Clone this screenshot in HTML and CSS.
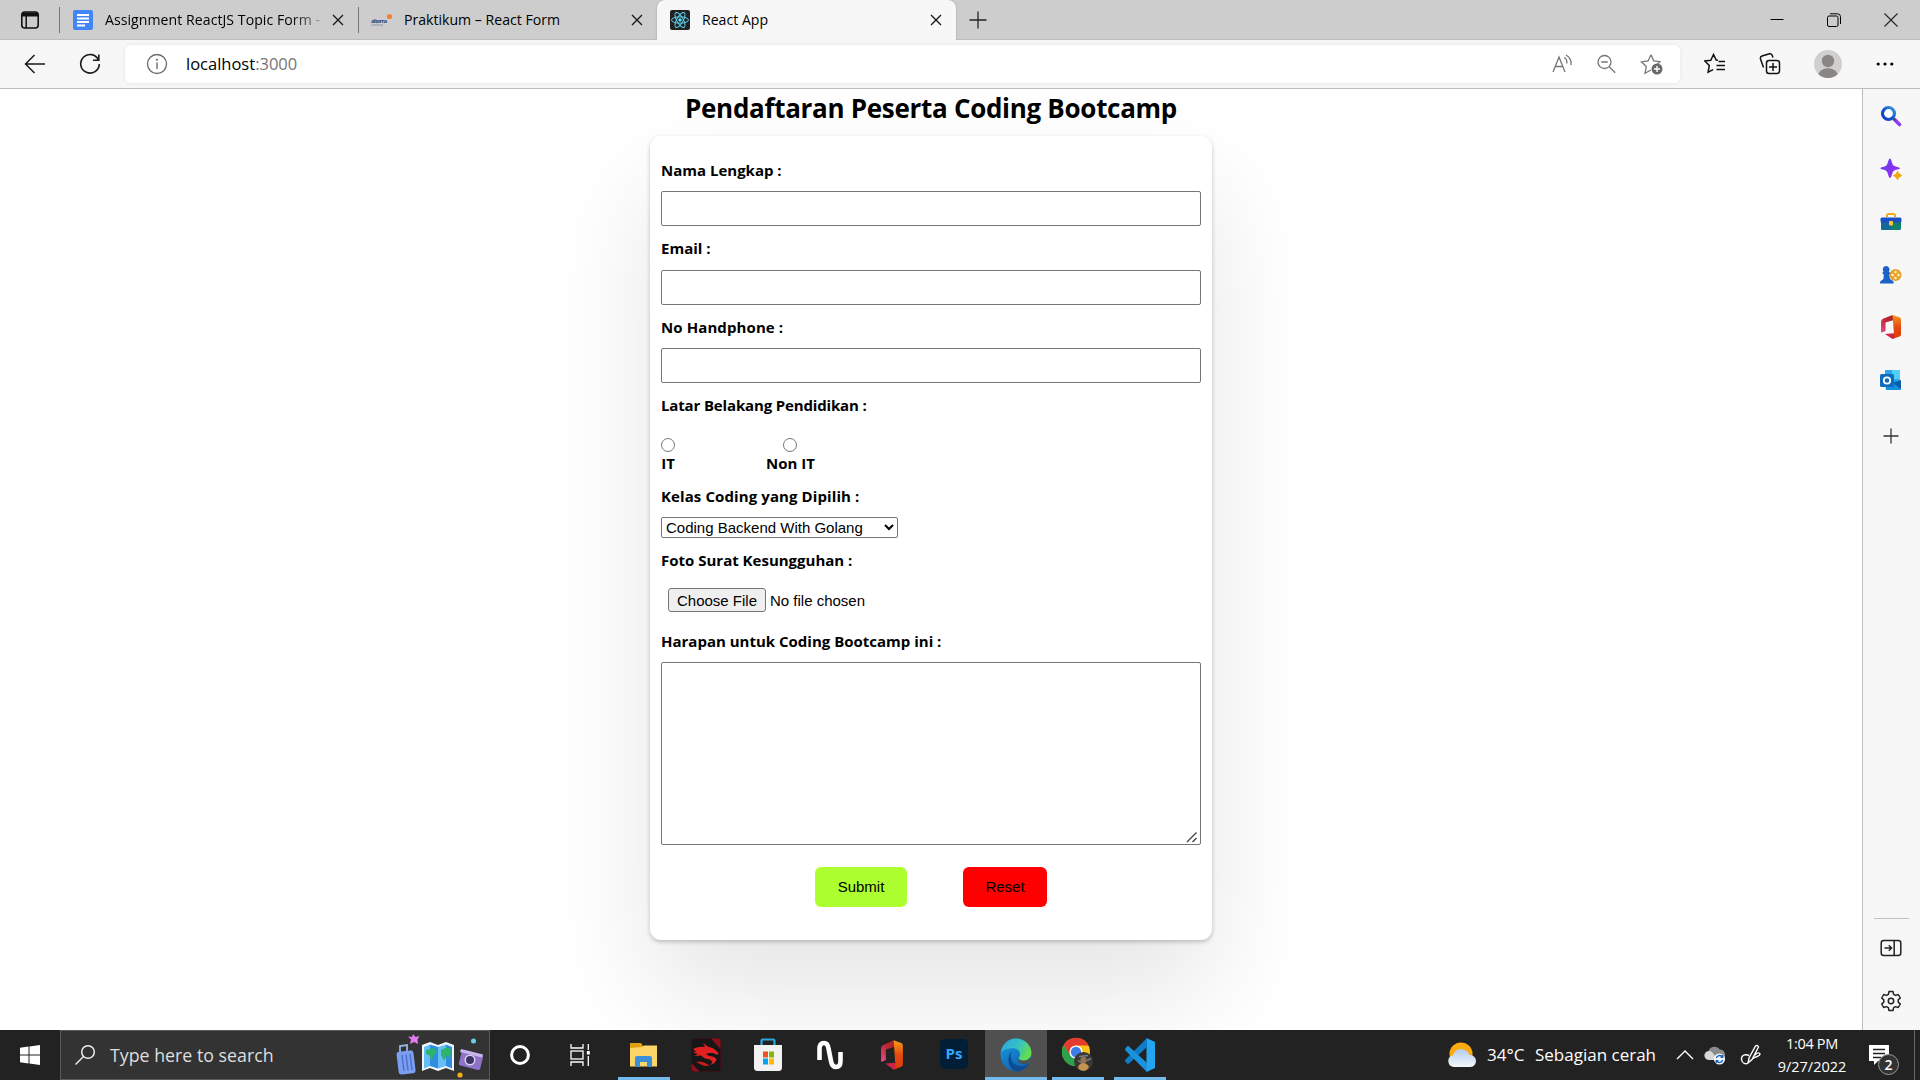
FILE: index.html
```html
<!DOCTYPE html>
<html lang="id">
<head>
<meta charset="utf-8">
<title>React App</title>
<link rel="stylesheet" href="styles.css">
</head>
<body>
<header class="tabstrip">
  <svg class="tab-actions" width="20" height="20" viewBox="0 0 20 20"><rect x="1.8" y="2" width="16.4" height="16" rx="3" fill="none" stroke="#111" stroke-width="1.6"/><path d="M2 2.5h16v4H2z" fill="#111"/><path d="M6.2 5v13" stroke="#111" stroke-width="1.5"/></svg>
  <div class="tab tab-docs">
    <svg class="favicon" width="20" height="20" viewBox="0 0 20 20"><rect width="20" height="20" rx="2" fill="#4285f4"/><path d="M4 5h12M4 8.500h12M4 12h12M4 15.500h8" stroke="#fff" stroke-width="1.8"/></svg>
    <span class="tab-title fade">Assignment ReactJS Topic Form -</span>
    <svg class="x" width="12" height="12" viewBox="0 0 12 12"><path d="M1 1l10 10M11 1L1 11"/></svg>
  </div>
  <div class="tab tab-alterra">
    <svg class="favicon" width="22" height="20" viewBox="0 0 22 20"><text x="0" y="12.5" class="alt" textLength="16">alterra</text><text x="0" y="16" class="alt2" textLength="12">academy</text><circle cx="18.5" cy="6.5" r="2.6" fill="#f58034"/></svg>
    <span class="tab-title">Praktikum – React Form</span>
    <svg class="x" width="12" height="12" viewBox="0 0 12 12"><path d="M1 1l10 10M11 1L1 11"/></svg>
  </div>
  <div class="tab tab-active">
    <svg class="favicon" width="20" height="20" viewBox="0 0 20 20"><rect width="20" height="20" rx="2" fill="#222"/><g fill="none" stroke="#61dafb" stroke-width=".9"><ellipse cx="10" cy="10" rx="8.5" ry="3.2"/><ellipse cx="10" cy="10" rx="8.5" ry="3.2" transform="rotate(60 10 10)"/><ellipse cx="10" cy="10" rx="8.5" ry="3.2" transform="rotate(120 10 10)"/></g><circle cx="10" cy="10" r="1.7" fill="#61dafb"/></svg>
    <span class="tab-title">React App</span>
    <svg class="x" width="12" height="12" viewBox="0 0 12 12"><path d="M1 1l10 10M11 1L1 11"/></svg>
  </div>
  <svg class="newtab" width="18" height="18" viewBox="0 0 18 18"><path d="M9 .5v17M.5 9h17" stroke="#222" stroke-width="1.3"/></svg>
  <div class="wincontrols">
    <svg width="14" height="14" viewBox="0 0 14 14"><path d="M.5 6.500h13" stroke="#000"/></svg>
    <svg width="14" height="14" viewBox="0 0 14 14" fill="none" stroke="#000"><rect x=".5" y="3" width="10.5" height="10.5" rx="1.5"/><path d="M3 .8h7.500a3 3 0 0 1 3 3V11"/></svg>
    <svg width="14" height="14" viewBox="0 0 14 14"><path d="M.5.5l13 13M13.500.5l-13 13" stroke="#222" stroke-width="1.1"/></svg>
  </div>
</header>
<nav class="toolbar">
  <svg width="22" height="20" viewBox="0 0 22 20" class="back"><path d="M21 10H2M10.500 1L1.500 10l9 9" fill="none" stroke="#1b1b1b" stroke-width="1.5"/></svg>
  <svg width="22" height="22" viewBox="0 0 22 22" class="reload"><path d="M19.500 7A9.300 9.300 0 1 0 20.300 11M19.800 1.500V7.200H14" fill="none" stroke="#1b1b1b" stroke-width="1.6"/></svg>
  <div class="omnibox">
    <svg width="22" height="22" viewBox="0 0 22 22"><circle cx="11" cy="11" r="9.500" fill="none" stroke="#6b6b6b" stroke-width="1.300"/><path d="M11 9.500v6.500" stroke="#6b6b6b" stroke-width="1.400"/><circle cx="11" cy="6.700" r="1" fill="#6b6b6b"/></svg>
    <span class="url">localhost<span class="port">:3000</span></span>
    <div class="omni-icons">
      <svg width="22" height="20" viewBox="0 0 22 20" fill="none" stroke="#767676" stroke-width="1.3"><path d="M1 18L7 3l6 15M3.200 12.500h7.600M12.300 3.500a6 6 0 0 1 2.500 6M14 1a10 10 0 0 1 5 10"/></svg>
      <svg width="20" height="20" viewBox="0 0 20 20" fill="none" stroke="#767676" stroke-width="1.3"><circle cx="7.500" cy="8" r="6.500"/><path d="M4.200 8h6.600M12.200 12.700l6 6"/></svg>
      <svg width="24" height="22" viewBox="0 0 24 22"><path d="M11 1.800l2.700 6 6.300.9-4.600 4.600M11 17l-6 3.200 1.300-6.700L1.500 8.900l6.600-.9L11 1.800" fill="none" stroke="#767676" stroke-width="1.300"/><circle cx="17" cy="16" r="5.500" fill="#696969"/><path d="M17 13v6M14 16h6" stroke="#fff" stroke-width="1.400"/></svg>
    </div>
  </div>
  <div class="tools">
    <svg width="22" height="22" viewBox="0 0 22 22"><path d="M14 7.300l-1.800-.3L9.500 1.500 6.800 7.200l-6 .8 4.500 4.500-1.200 6.700 5-2.600M14.500 8.500H21M12.500 12.500H21M12.500 16.500H21" fill="none" stroke="#111" stroke-width="1.500"/></svg>
    <svg width="22" height="22" viewBox="0 0 22 22" fill="none" stroke="#111" stroke-width="1.500"><rect x="7.500" y="7.500" width="13" height="13" rx="2.500"/><path d="M14 10v8M10 14h8M4.500 14.500L1.500 6Q1 3.700 3 3l7.500-2.200q2-.4 2.800 1.700l.7 2"/></svg>
    <svg width="28" height="28" viewBox="0 0 28 28"><defs><clipPath id="av"><circle cx="14" cy="14" r="14"/></clipPath></defs><g clip-path="url(#av)"><rect width="28" height="28" fill="#d2d0ce"/><circle cx="14" cy="11" r="6.200" fill="#8a8683"/><ellipse cx="14" cy="26" rx="10" ry="7.800" fill="#8a8683"/></g></svg>
    <svg width="18" height="4" viewBox="0 0 18 4"><circle cx="2.200" cy="2" r="1.600"/><circle cx="9" cy="2" r="1.600"/><circle cx="15.800" cy="2" r="1.600"/></svg>
  </div>
</nav>
<div class="workspace">
  <main class="page">
    <h1 class="heading">Pendaftaran Peserta Coding Bootcamp</h1>
    <form class="card">
      <div class="field"><label for="nama">Nama Lengkap :</label><input id="nama" class="text" type="text"></div>
      <div class="field"><label for="email">Email :</label><input id="email" class="text late" type="text"></div>
      <div class="field"><label class="looser" for="hp">No Handphone :</label><input id="hp" class="text" type="text"></div>
      <div class="field"><label class="tighter">Latar Belakang Pendidikan :</label>
        <div class="radios">
          <div class="radio"><input type="radio" name="bg" id="it"><label for="it">IT</label></div>
          <div class="radio"><input type="radio" name="bg" id="nonit"><label for="nonit">Non IT</label></div>
        </div>
      </div>
      <div class="field"><label class="looser" for="kelas">Kelas Coding yang Dipilih :</label><select id="kelas"><option>Coding Backend With Golang</option></select></div>
      <div class="field"><label for="foto">Foto Surat Kesungguhan :</label><input id="foto" class="file" type="file"></div>
      <div class="field harapan"><label for="harapan">Harapan untuk Coding Bootcamp ini :</label>
        <div class="area"><textarea id="harapan"></textarea><svg class="grip" width="12" height="12" viewBox="0 0 12 12"><path d="M1 11L10.500 1.500M6.500 11l4-4" stroke="#444" stroke-width="1.400"/></svg></div>
      </div>
      <div class="actions"><button type="button" class="submit">Submit</button><button type="button" class="reset">Reset</button></div>
    </form>
  </main>
  <aside class="sidebar">
    <div class="side-top">
      <svg width="22" height="22" viewBox="0 0 22 22"><defs><linearGradient id="sg" x1="1" y1="0" x2="0" y2="1"><stop offset="0" stop-color="#3aa0d8"/><stop offset=".5" stop-color="#1757d0"/><stop offset="1" stop-color="#0b3fc0"/></linearGradient></defs><path d="M14.500 14.500l5 5" stroke="#8b3ff0" stroke-width="3.600" stroke-linecap="round"/><path d="M12.500 12.500l3 3" stroke="#444" stroke-width="1.500"/><circle cx="8.500" cy="8.500" r="6" fill="#fff" stroke="url(#sg)" stroke-width="3.200"/></svg>
      <svg width="22" height="22" viewBox="0 0 22 22"><defs><linearGradient id="sp" x1="0" y1="0" x2="1" y2="1"><stop offset="0" stop-color="#5b3df5"/><stop offset="1" stop-color="#a52bf0"/></linearGradient></defs><path d="M10 .5c1.500 0 1.700 5.500 3.600 6.900S20 9 20 10.200s-4.800 1.200-6.400 2.800S11.500 20 10 20s-1.800-5.300-3.600-7S.5 11.500.5 10.200s4.300-1.200 5.900-2.800S8.500.5 10 .5z" fill="url(#sp)"/><path d="M17.500 12.500q1.200 3.800 5 5-3.800 1.200-5 5-1.200-3.800-5-5 3.800-1.200 5-5z" fill="#f5a80c"/></svg>
      <svg width="22" height="22" viewBox="0 0 22 22"><path d="M7 6V4.500Q7 3 8.500 3h5Q15 3 15 4.500V6" fill="none" stroke="#efa91c" stroke-width="2"/><rect x="1" y="9" width="20" height="10" rx="1.500" fill="#13806b"/><path d="M1 10h10v9H2.500Q1 19 1 17.500z" fill="#146a94"/><rect x=".5" y="6.500" width="21" height="5" rx="1.500" fill="#1a4fc4"/><rect x="9" y="10" width="4" height="4.500" rx="1" fill="#ffc63a"/></svg>
      <svg width="22" height="22" viewBox="0 0 22 22"><circle cx="15.500" cy="11" r="6" fill="#e6a32b"/><g fill="#fff0c0"><circle cx="15.500" cy="8" r="1.300"/><circle cx="15.500" cy="14" r="1.300"/><circle cx="12.500" cy="11" r="1.300"/><circle cx="18.500" cy="11" r="1.300"/></g><path d="M6 2a3.500 3.500 0 0 1 2.800 5.700L10.500 9l-1.300 1.400.8 4.500 3 2.200q.7.500.7 2.300H0q0-1.800.7-2.300L3.400 15l.4-4.600L2 9l1.500-1.300A3.500 3.500 0 0 1 6 2z" fill="#1b62c8"/></svg>
      <svg width="22" height="26" viewBox="0 0 22 26"><defs><linearGradient id="of" x1="0" y1="1" x2="1" y2="0"><stop offset="0" stop-color="#e8508a"/><stop offset=".5" stop-color="#c0283c"/><stop offset="1" stop-color="#9c2418"/></linearGradient><linearGradient id="of2" x1="0" y1="0" x2="0" y2="1"><stop offset="0" stop-color="#f59a1c"/><stop offset=".5" stop-color="#e64a10"/><stop offset="1" stop-color="#d93c0c"/></linearGradient></defs><path d="M12.500 1L3 4.800Q1 5.600 1 8v9.500q0 1.500 1.500.8L5.500 17V8.500l8.500-2.400z" fill="url(#of)"/><path d="M12.500 1l7 2.300Q21 3.900 21 5.500v15q0 1.500-1.500 2L12.500 25l1.500-5z" fill="url(#of2)"/><path d="M5 20l9-.7V5.500V24l-1.500 1z" fill="#cf2444"/></svg>
      <svg width="22" height="22" viewBox="0 0 22 22"><rect x="5" y="1" width="15" height="14" rx="1" fill="#28a8ea"/><path d="M12 1h7q1 0 1 1v8h-8z" fill="#50d0f8"/><path d="M5 12h16v8q0 1-1 1H6z" fill="#1490df"/><path d="M21 11v9l-8-6z" fill="#0a5ea8"/><rect y="5" width="14" height="13" rx="1.500" fill="#0f6cbd"/><circle cx="7" cy="11.500" r="3.200" fill="none" stroke="#fff" stroke-width="1.800"/></svg>
      <svg width="16" height="16" viewBox="0 0 16 16"><path d="M8 .5v15M.5 8h15" stroke="#333" stroke-width="1.300"/></svg>
    </div>
    <div class="side-bottom">
      <svg width="22" height="18" viewBox="0 0 22 18" fill="none" stroke="#222" stroke-width="1.500"><rect x="1.200" y="1.500" width="19.600" height="15" rx="2.500"/><path d="M14.200 1.500v15M4.500 9h7M8.800 6.200L11.600 9l-2.800 2.800"/></svg>
      <svg width="22" height="22" viewBox="0 0 22 22" fill="none" stroke="#222" stroke-width="1.500" stroke-linejoin="round"><circle cx="11" cy="11" r="2.700"/><path d="M9 1.500h4l.6 2.800 2 1.100 2.700-.9 2 3.500-2.100 1.900v2.200l2.100 1.900-2 3.500-2.700-.9-2 1.100-.6 2.800H9l-.6-2.800-2-1.100-2.700.9-2-3.500 2.100-1.900V9.900L1.700 8l2-3.500 2.700.9 2-1.100z"/></svg>
    </div>
  </aside>
</div>
<footer class="taskbar">
  <div class="start"><svg width="20" height="20" viewBox="0 0 20 20"><path d="M0 2.800L8.500 1.600v8H0zM9.500 1.500L20 0v9.600H9.500zM0 10.500h8.500v8L0 17.300zM9.500 10.500H20V20L9.500 18.600z" fill="#fff"/></svg></div>
  <div class="search">
    <svg width="22" height="22" viewBox="0 0 22 22" fill="none" stroke="#eee" stroke-width="1.500"><circle cx="13" cy="8" r="6.300"/><path d="M8.500 12.500L.5 20.500"/></svg>
    <span class="search-text">Type here to search</span>
    <svg class="travel" width="90" height="46" viewBox="0 0 90 46">
      <path d="M18 2l2.500 3 4-1-2 3.500L23 12l-4-2-4 2 1-4.500-3-3 4 .5z" fill="#e07cf0"/>
      <path d="M5 20V14l7-1v6" fill="none" stroke="#9ab4e8" stroke-width="1.800"/>
      <rect x="2.500" y="19" width="17" height="23" rx="3" fill="#7b9ff0" transform="rotate(-7 11 30)"/><path d="M7 23l2 16M11 22.500l2 16M15 22l2 16" stroke="#4f6fd0" stroke-width="1.500"/>
      <path d="M27 13l8-3 8 3 8-3 8 3v26l-8-3-8 3-8-3-8 3z" fill="#f2f6fa"/><path d="M29 15l6-2.500V34l-6 2.500zM43 15l8-2.500V34l-8 2.500z" fill="#67bdf5"/><path d="M35 12.500l8 2.500v21.500L35 34zM51 12.500l6 2.500v21.500L51 34z" fill="#2f8ee0"/><path d="M31 18l8-2 3 4-4 4-1 5-3-6-3-1zM46 18l6-3 4 3-1 9-3-4-3 6-3-6z" fill="#2db56c"/>
      <rect x="65" y="20" width="22" height="16" rx="2" fill="#8e74c8" transform="rotate(14 76 28)"/><path d="M66 17l22 5.500-1 3-22-5.500z" fill="#c8b5ec"/><circle cx="75" cy="28" r="5.500" fill="#d9d0f0"/><circle cx="75" cy="28" r="4" fill="#3b3468"/>
      <circle cx="78.500" cy="9" r="2.500" fill="#66d0e8"/><circle cx="65" cy="43" r="2.600" fill="#f7ae17"/>
    </svg>
  </div>
  <div class="apps">
    <div class="app"><svg width="22" height="22" viewBox="0 0 22 22"><circle cx="11" cy="11" r="8.400" fill="none" stroke="#fff" stroke-width="3"/></svg></div>
    <div class="app taskview"><svg width="20" height="22" viewBox="0 0 20 22" fill="none" stroke="#fff" stroke-width="1.300"><path d="M1 0v4h12V0M1 22v-4h12v4M18.300 0v6M18.300 12v10"/><rect x="1" y="7" width="12" height="8"/><path d="M16.800 7h3v3.500h-3z" fill="#fff" stroke="none"/></svg></div>
    <div class="app open"><svg width="30" height="26" viewBox="0 0 30 26"><path d="M1 1h11l2 3v3H1z" fill="#e0a010"/><path d="M1 6l12-1 2-1.500h13v21H1z" fill="#fcd568"/><path d="M6 25v-9q0-2 2-2h13q2 0 2 2v9h-5v-5h-7v5z" fill="#3a8fd8"/></svg></div>
    <div class="app"><svg width="30" height="34" viewBox="0 0 30 34"><rect x=".5" y=".5" width="29" height="33" rx="3" fill="#161616" stroke="#3a1016"/><path d="M20 .5h6.500q3 0 3 3V11zM.5 25l8 8.500h-5q-3 0-3-3z" fill="#8a101c"/><path d="M2 11q6-3 12-2l-2-4 5.500 4q5 .5 8 4l2 2-1 2-4.500-2q-5-.5-7 1l3 2q6 0 7.500 3.500-1 4-6 5.500l2-3-2.500-2.500-5-1-4-3-7 .5 4-2-5-1.500 3-.8z" fill="#e32020"/><path d="M5 24q6-1.500 9 1l5 2.500q-5 1-8-.5z" fill="#c81c1c"/></svg></div>
    <div class="app"><svg width="30" height="34" viewBox="0 0 30 34"><path d="M8.500 8V3Q8.500 1.500 10 1.500h10q1.500 0 1.500 1.500v5" fill="none" stroke="#2ca8e0" stroke-width="2.200"/><path d="M1 7h28v22.500q0 3.500-3.500 3.500h-21Q1 33 1 29.500z" fill="#f2f2f2"/><path d="M10 13.500h5v6h-5z" fill="#f25022"/><path d="M16 13.500h5v6h-5z" fill="#7fba00"/><path d="M10 20.500h5v6h-5z" fill="#00a4ef"/><path d="M16 20.500h5v6h-5z" fill="#ffb900"/></svg></div>
    <div class="app"><svg width="28" height="30" viewBox="0 0 28 30"><path d="M3.500 20V9q0-6 4.500-6 3.700 0 4.500 5.500L15 21q1 6 5 6 4.500 0 4.500-6v-9" fill="none" stroke="#fff" stroke-width="4.600"/></svg></div>
    <div class="app"><svg width="24" height="32" viewBox="0 0 22 26" preserveAspectRatio="none"><path d="M12.500 1L3 4.800Q1 5.600 1 8v9.500q0 1.500 1.500.8L5.500 17V8.500l8.500-2.400z" fill="url(#of)"/><path d="M12.500 1l7 2.300Q21 3.900 21 5.500v15q0 1.500-1.500 2L12.500 25l1.500-5z" fill="url(#of2)"/><path d="M5 20l9-.7V5.500V24l-1.500 1z" fill="#cf2444"/></svg></div>
    <div class="app"><div class="ps">Ps</div></div>
    <div class="app open current"><svg width="32" height="34" viewBox="0 0 30 30" preserveAspectRatio="none"><defs><linearGradient id="e1" x1="0" y1="0" x2="1" y2=".4"><stop offset="0" stop-color="#2aa5e0"/><stop offset=".6" stop-color="#35c1c4"/><stop offset="1" stop-color="#62dc50"/></linearGradient><linearGradient id="e2" x1="0" y1="0" x2=".6" y2="1"><stop offset="0" stop-color="#1b9de2"/><stop offset="1" stop-color="#0f62b0"/></linearGradient></defs><circle cx="15" cy="15" r="14.500" fill="url(#e2)"/><path d="M.6 14C1.500 5.500 8 .5 15 .5c8 0 14.500 6 14.500 12.500 0 4-3 7-7 7-3.500 0-5-1.200-5-2.200 0-.8 1.300-1.300 1.300-3.600 0-2.500-2.300-5.200-6.800-5.200C6 9 1.500 11 .6 14z" fill="url(#e1)"/><path d="M12 11c-3 3-2.500 9 1.500 12 4 3 9.500 2.300 14-1-3 5.500-8 7.500-12.500 7.500C10 28 7.500 23 8 18c.3-3 1.800-5.500 4-7z" fill="#0d4c93"/><path d="M17.500 17.800c0 1 1.500 2.200 5 2.200 2.500 0 4.500-1 5.800-3L30 22l-2.500-.5c-3 2-8 2-10.500-.5z" fill="#505050"/></svg></div>
    <div class="app open chrome"><svg width="34" height="36" viewBox="0 0 34 36"><circle cx="15" cy="15" r="14" fill="#fbc116"/><path d="M15 15l1 14A14 14 0 0 1 2.800 8l6 9z" fill="#2ba24c"/><path d="M2.800 8A14 14 0 0 1 27.600 8.500H15L9 18z" fill="#e33b2e"/><circle cx="15" cy="15" r="6.600" fill="#fff"/><circle cx="15" cy="15" r="5.200" fill="#3b7de8"/><circle cx="22.500" cy="24.500" r="9.500" fill="#3b3732"/><path d="M17 31q1-5 5-5t6 4q-2 4-6 4-3 0-5-3z" fill="#c49350"/><circle cx="22.500" cy="23" r="3.200" fill="#8f7458"/><path d="M18 19.500l9-1M17 23.500l3 2M26 23.500l4-2" stroke="#777f8c" stroke-width="1.500"/></svg></div>
    <div class="app open vs"><svg width="30" height="34" viewBox="0 0 30 30" preserveAspectRatio="none"><path d="M21.500 0L30 3.500v23L21.500 30z" fill="#25a5f0"/><path d="M22 0v8L4 22.500q-1 .7-2 0L.5 21q-.8-1 0-2z" fill="#0f7cc8"/><path d="M22 30v-8L4 7.500q-1-.7-2 0L.5 9q-.8 1 0 2z" fill="#1a93de"/></svg></div>
  </div>
  <div class="tray">
    <svg class="weather" width="30" height="26" viewBox="0 0 30 26"><defs><linearGradient id="cl" x1="0" y1="0" x2="0" y2="1"><stop offset="0" stop-color="#b4cbee"/><stop offset="1" stop-color="#f4f7fc"/></linearGradient></defs><circle cx="14" cy="12" r="11.500" fill="#fbab10"/><path d="M6.500 25a6 6 0 0 1-.5-11.800Q8 7 14 7t8.500 6A6 6 0 0 1 23.500 25z" fill="url(#cl)"/></svg>
    <span class="temp">34°C</span><span class="cond">Sebagian cerah</span>
    <svg class="chev" width="18" height="10" viewBox="0 0 18 10"><path d="M1 9l8-8 8 8" fill="none" stroke="#fff" stroke-width="1.400"/></svg>
    <svg class="cloud" width="22" height="20" viewBox="0 0 22 20"><path d="M5 15a4.500 4.500 0 0 1-.5-9A6.500 6.500 0 0 1 16 4.500a5 5 0 0 1 3 9z" fill="#8b8b8b"/><path d="M5 15a4.500 4.500 0 1 1 3-8l6 8z" fill="#d8d8d8"/><circle cx="15.500" cy="14" r="5.600" fill="#f4f8fc"/><path d="M12.300 13a3.500 3.500 0 0 1 6-1.300M18.700 15a3.500 3.500 0 0 1-6 1.300M18.800 10v2.300h-2.300M12.200 18v-2.300h2.300" fill="none" stroke="#1763b8" stroke-width="1.300"/></svg>
    <svg class="pen" width="22" height="22" viewBox="0 0 22 22" fill="none" stroke="#fff" stroke-width="1.400"><path d="M8 19l1-5L15.500 2q2-1.500 3 1L12 15.500 8 19M9 11.500c-4-2-8 0-7.500 4S6 20.500 8 19M15 11c2-3 5-2.500 5-.7 0 2.200-3.500 1.700-7 4"/></svg>
    <div class="clock"><span class="time">1:04 PM</span><span>9/27/2022</span></div>
    <div class="notify"><svg width="20" height="20" viewBox="0 0 20 20"><path d="M0 0h20v16H9l-4 4v-4H0z" fill="#fff"/><path d="M4 4.500h12M4 8.500h12M4 12.500h8" stroke="#222" stroke-width="1.300"/></svg><span class="badge">2</span></div>
    <div class="peek"></div>
  </div>
</footer>
</body>
</html>
```
FILE: styles.css
```css
* { box-sizing: border-box; }
body {
  margin: 0;
  width: 1920px;
  height: 1080px;
  overflow: hidden;
  display: flex;
  flex-direction: column;
  background: #fff;
  color: #000;
  font-family: "Segoe UI", "Open Sans", sans-serif;
  font-size: 15px;
}
svg { display: block; flex: none; }

/* tab strip */
.tabstrip {
  height: 40px;
  flex: none;
  display: flex;
  align-items: center;
  background: #cdcdcd;
  box-shadow: inset 0 -1px #bdbdbd;
}
.tab-actions { margin: 0 19px 0 20px; }
.tab {
  height: 40px;
  display: flex;
  align-items: center;
}
.tab-docs, .tab-alterra { border-image: linear-gradient(transparent 8px, #777 8px, #777 32px, transparent 32px) 1; border-left: 1px solid; }
.tab-docs { width: 299px; padding-left: 13px; }
.tab-alterra { width: 299px; padding-left: 12px; }
.tab-active { width: 299px; padding-left: 13px; background: #f7f7f7; border-radius: 8px 8px 0 0; box-shadow: 0 0 2px #999; clip-path: inset(0 -3px); }
.favicon { margin-right: 12px; }
.tab-alterra .favicon { margin-right: 11px; }
.tab-title { width: 224px; font-size: 14.1px; line-height: 22px; padding-bottom: 1px; white-space: nowrap; }
.fade { letter-spacing: .05px; background: linear-gradient(90deg, #000 185px, #666 207px, #bbb 220px); -webkit-background-clip: text; background-clip: text; color: transparent; }
.x { stroke: #1a1a1a; stroke-width: 1.4; margin-left: 3px; }
.tab-active .x { margin-left: 4px; }
.alt { font: bold 6px "Open Sans", sans-serif; fill: #2c4a7c; }
.alt2 { font: 4px "Open Sans", sans-serif; fill: #8592a8; }
.newtab { margin-left: 13px; }
.wincontrols { margin-left: auto; margin-right: 22px; display: flex; gap: 43px; }

/* toolbar */
.toolbar {
  height: 49px;
  flex: none;
  display: flex;
  align-items: center;
  background: #f7f7f7;
  border-bottom: 1px solid #bdbdbd;
}
.back { margin-left: 24px; }
.reload { margin-left: 33px; }
.omnibox {
  margin-left: 24px;
  width: 1555px;
  height: 38px;
  padding: 0 16px 0 21px;
  display: flex;
  align-items: center;
  background: #fff;
  border-radius: 6px;
  box-shadow: 0 0 4px rgba(0,0,0,.08);
}
.url { margin-left: 18px; font-size: 16.5px; line-height: 24px; }
.port { color: #757575; }
.omni-icons { margin-left: auto; display: flex; align-items: center; gap: 23px; }
.tools { display: flex; align-items: center; margin-left: 24px; }
.tools svg:nth-child(2) { margin-left: 33px; }
.tools svg:nth-child(3) { margin-left: 33px; }
.tools svg:nth-child(4) { margin-left: 34px; }

/* page */
.workspace { height: 941px; flex: none; display: flex; background: #f7f7f7; }
.page {
  width: 1863px;
  background: #fff;
  border-right: 1px solid #bdbdbd;
  display: flex;
  flex-direction: column;
  align-items: center;
  overflow: hidden;
}
.heading { margin: 1px 0 10px; font-size: 26px; letter-spacing: -.3px; line-height: 36px; font-weight: 700; }
.card {
  width: 562px;
  height: 804px;
  padding: 12px 11px 0;
  background: #fff;
  border-radius: 11px;
  box-shadow: 0 55px 110px rgba(0,0,0,.1), 0 2px 4px rgba(0,0,0,.22);
}
.field { margin-top: 11px; display: flex; flex-direction: column; align-items: flex-start; }
.field label { font-weight: 700; font-size: 15px; line-height: 22px; }
.field .tighter { letter-spacing: -.15px; }
.field .looser { letter-spacing: .1px; }
.text { width: 100%; height: 35px; margin: 10px 0 0; border: 1px solid #767676; border-radius: 2px; }
.late { margin-top: 11px; }
.radios { display: flex; gap: 91px; margin-top: 22px; }
.radio { display: flex; flex-direction: column; align-items: center; }
.radio input { width: 14px; height: 14px; margin: 0; }
select { margin-top: 10px; width: 237px; height: 21px; padding: 0; border: 1px solid #767676; border-radius: 2px; background-color: #fff; font: 15px "Liberation Sans", sans-serif; color: #000; }
.file { margin: 17px 0 0 7px; height: 24px; font: 15px "Liberation Sans", sans-serif; color: #000; }
.file::file-selector-button { height: 24px; width: 98px; padding: 0; margin-right: 4px; border: 1px solid #767676; border-radius: 3px; background: #efefef; font: inherit; }
.harapan { margin-top: 18px; }
.area { position: relative; width: 100%; margin-top: 10px; }
textarea { display: block; margin: 0; width: 100%; height: 183px; border: 1px solid #767676; border-radius: 2px; resize: none; }
.grip { position: absolute; right: 3px; bottom: 2px; }
.actions { display: flex; justify-content: center; gap: 56px; margin-top: 22px; }
.actions button { height: 40px; padding: 0 0 2px; border: 0; border-radius: 6px; font: 15px "Liberation Sans", sans-serif; color: #000; }
.submit { width: 92px; background: #adff2f; }
.actions .reset { width: 84px; background: #f00; }

/* edge sidebar */
.sidebar { width: 57px; display: flex; flex-direction: column; justify-content: space-between; align-items: center; padding: 0 1px 18px 0; }
.side-top { display: flex; flex-direction: column; align-items: center; padding-top: 16px; gap: 31px; }
.side-top svg:nth-child(5) { margin: -3px 0 -2px; }
.side-top svg:nth-child(7) { margin-top: 6px; }
.side-bottom { width: 35px; border-top: 1px solid #c0c0c0; padding-top: 20px; display: flex; flex-direction: column; align-items: center; gap: 33px; }

/* taskbar */
.taskbar { height: 50px; flex: none; display: flex; background: #222; color: #fff; }
.start { width: 60px; display: flex; align-items: center; justify-content: center; }
.search { width: 430px; border: 1px solid #5a5a5a; background: #333; display: flex; align-items: center; padding-left: 14px; }
.search-text { margin-left: 13px; font-size: 17.8px; line-height: 26px; color: #dedede; width: 285px; }
.apps { display: flex; margin-left: -1px; }
.app { width: 62px; display: flex; align-items: center; justify-content: center; position: relative; }
.taskview { padding-right: 4px; }
.open::after { content: ""; position: absolute; left: 5px; right: 5px; bottom: 0; height: 3px; background: #76b9ed; }
.current { background: #505050; }
.current::after { left: 0; right: 0; }
.ps { width: 28px; height: 30px; margin-top: -3px; border-radius: 5px; background: #001e36; color: #31a8ff; font: bold 15px/28px "Open Sans", sans-serif; text-align: center; }
.tray { margin-left: auto; display: flex; align-items: center; font-size: 17px; }
.temp, .cond { line-height: 26px; white-space: nowrap; }
.temp { margin-left: 10px; width: 48px; }
.cond { width: 121px; }
.chev { margin-left: 20px; }
.cloud { margin-left: 10px; }
.pen { margin-left: 14px; }
.clock { margin-left: 15px; width: 70px; font-size: 14.5px; line-height: 23px; display: flex; flex-direction: column; align-items: center; }
.time { letter-spacing: -.35px; }
.notify { margin-left: 22px; width: 20px; position: relative; }
.badge { position: absolute; left: 9px; top: 9px; width: 21px; height: 21px; border: 1px solid #999; border-radius: 50%; background: #333; font-size: 14px; font-weight: 600; line-height: 19px; text-align: center; }
.peek { margin-left: 25px; width: 6px; height: 50px; border-left: 1px solid #666; }
```
